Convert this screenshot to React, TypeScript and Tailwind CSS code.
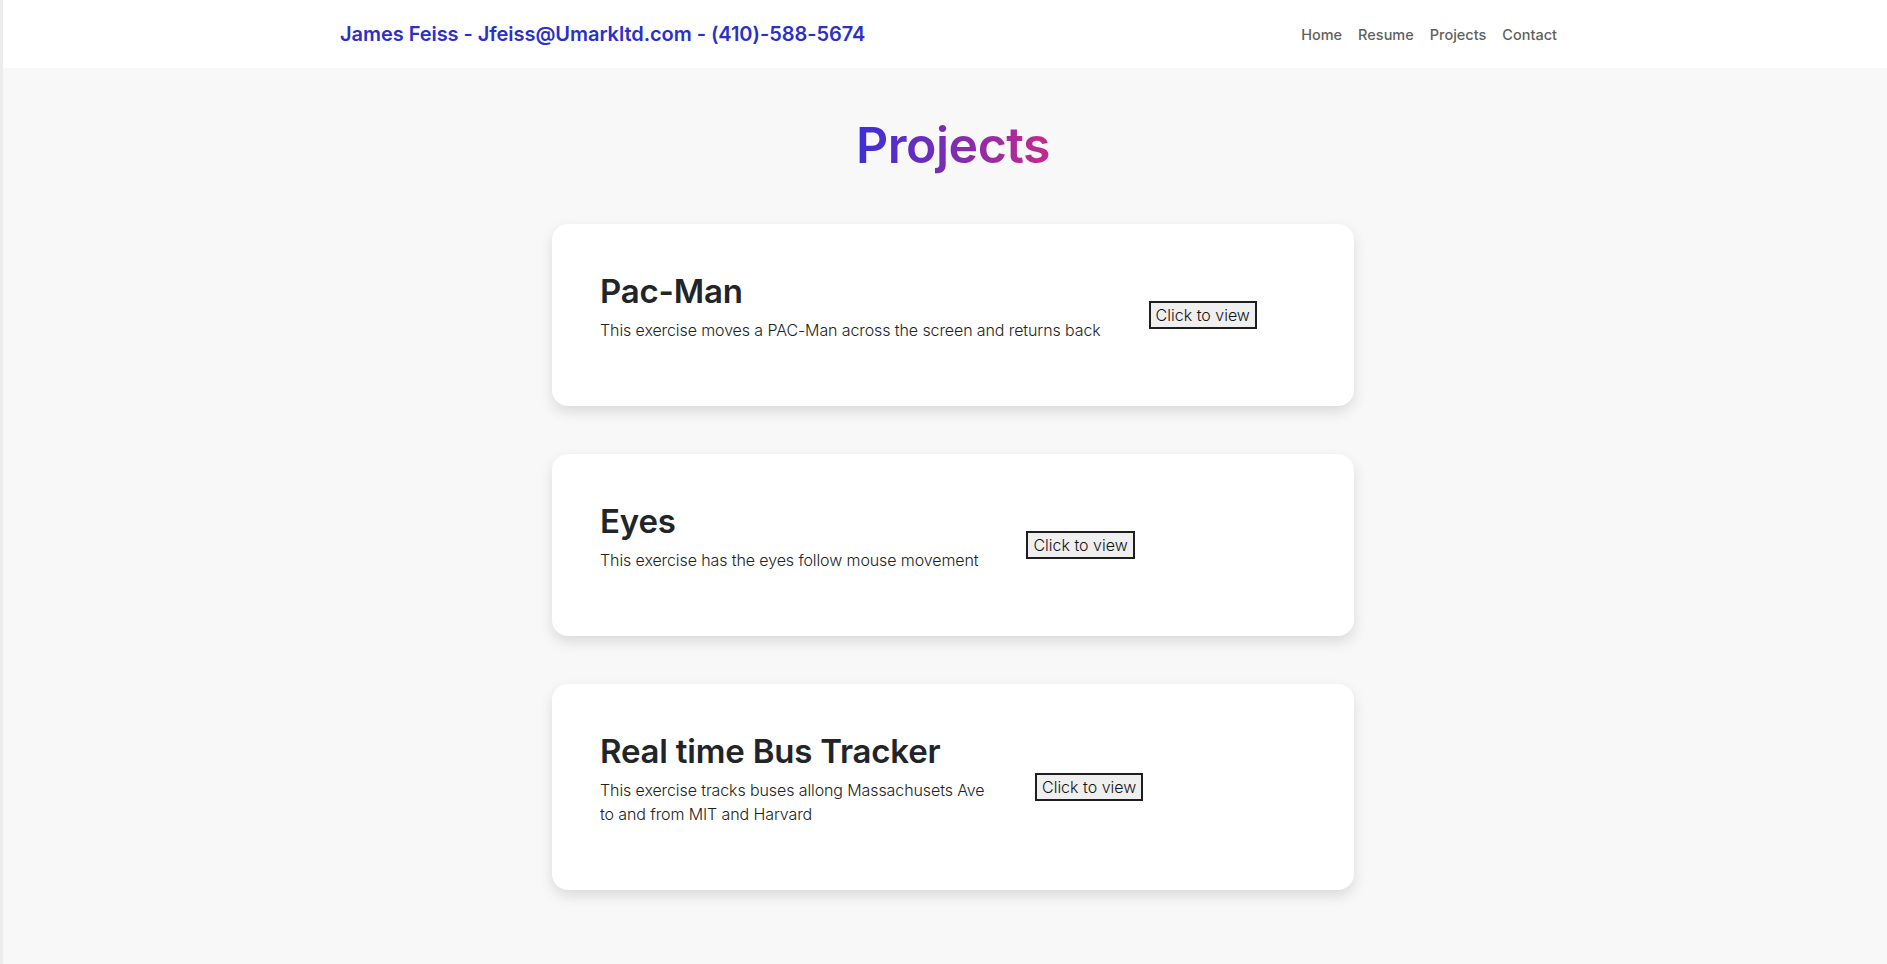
import React from "react";

const font = { fontFamily: "Inter, 'Noto Sans', sans-serif" };

type Project = { title: string; desc: string; descClass?: string };

const projects: Project[] = [
  { title: "Pac-Man", desc: "This exercise moves a PAC-Man across the screen and returns back" },
  { title: "Eyes", desc: "This exercise has the eyes follow mouse movement" },
  {
    title: "Real time Bus Tracker",
    desc: "This exercise tracks buses allong Massachusets Ave to and from MIT and Harvard",
    descClass: "w-[387px]",
  },
];

function Card({ p }: { p: Project }) {
  return (
    <div className="w-[802px] bg-white rounded-[16px] shadow-[0_6px_14px_rgba(0,0,0,0.12)] p-12 flex items-center gap-12">
      <div className="flex flex-col">
        <h2 className="text-[33px] leading-[38px] font-semibold text-[#212529] tracking-[-0.2px] mb-2">{p.title}</h2>
        <p className={"text-[16px] leading-[24px] font-light text-[#222] tracking-[-0.1px] mb-4 " + (p.descClass ?? "")}>
          {p.desc}
        </p>
      </div>
      <button className="shrink-0 bg-[#efefef] border-2 border-[#1e1e1e] px-[5px] text-[16px] leading-[24px] font-light text-[#111] tracking-[0px]">
        Click to view
      </button>
    </div>
  );
}

export default function App() {
  return (
    <div style={font} className="min-h-screen bg-[#f8f8f8] border-l-[3px] border-l-[#ececec]">
      <header className="h-[68px] bg-white flex items-center justify-between pl-[337px] pr-[322px]">
        <div className="text-[20px] font-semibold text-[#2c2fcb] tracking-[-0.05px]">
          James Feiss - Jfeiss@Umarkltd.com - (410)-588-5674
        </div>
        <nav className="flex text-[14.5px] font-medium text-[#5f5f5f] pt-[1px]">
          <a className="px-2">Home</a>
          <a className="px-2">Resume</a>
          <a className="px-2">Projects</a>
          <a className="px-2">Contact</a>
        </nav>
      </header>
      <main className="flex flex-col items-center pb-16 pl-[16px]">
        <h1 className="mt-[46px] mb-[48px] inline-block text-[50px] leading-[62px] font-semibold tracking-[-0.5px] bg-[linear-gradient(90deg,#3a2fd8,#c42a8a)] bg-clip-text text-transparent">
          Projects
        </h1>
        <div className="flex flex-col gap-12">
          {projects.map((p) => (
            <Card key={p.title} p={p} />
          ))}
        </div>
      </main>
    </div>
  );
}
